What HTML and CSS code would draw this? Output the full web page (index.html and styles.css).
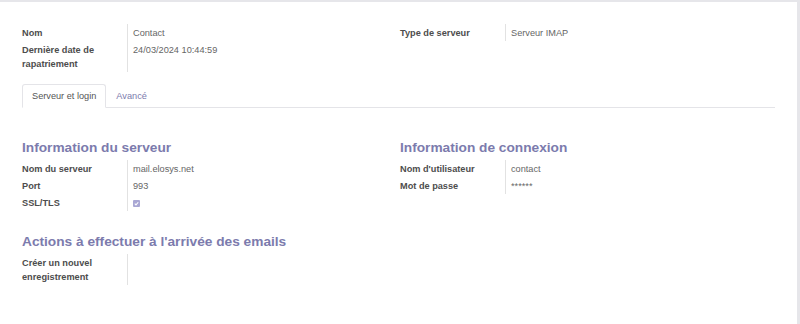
FILE: index.html
```html
<!DOCTYPE html>
<html lang="fr">
<head>
    <meta charset="UTF-8">
    <title>Serveur de courriels entrants</title>
    <link rel="stylesheet" href="styles.css">
</head>
<body>
    <div class="sheet">
        <div class="group">
            <div class="fields">
                <div class="field">
                    <div class="label">Nom</div>
                    <div class="value">Contact</div>
                </div>
                <div class="field">
                    <div class="label">Dernière date de rapatriement</div>
                    <div class="value">24/03/2024 10:44:59</div>
                </div>
            </div>
            <div class="fields">
                <div class="field">
                    <div class="label">Type de serveur</div>
                    <div class="value">Serveur IMAP</div>
                </div>
            </div>
        </div>

        <ul class="tabs">
            <li class="tab active">Serveur et login</li>
            <li class="tab">Avancé</li>
        </ul>

        <div class="tab-content">
            <div class="group">
                <div class="fields">
                    <h2>Information du serveur</h2>
                    <div class="field">
                        <div class="label">Nom du serveur</div>
                        <div class="value">mail.elosys.net</div>
                    </div>
                    <div class="field">
                        <div class="label">Port</div>
                        <div class="value">993</div>
                    </div>
                    <div class="field">
                        <div class="label">SSL/TLS</div>
                        <div class="value">
                            <span class="checkbox">
                                <svg width="7" height="7" viewBox="0 0 8 8"><path d="M2 4.2 L3.4 5.6 L6 2.6" fill="none" stroke="#fff" stroke-width="1.2"/></svg>
                            </span>
                        </div>
                    </div>
                </div>
                <div class="fields">
                    <h2>Information de connexion</h2>
                    <div class="field">
                        <div class="label">Nom d'utilisateur</div>
                        <div class="value">contact</div>
                    </div>
                    <div class="field">
                        <div class="label">Mot de passe</div>
                        <div class="value">******</div>
                    </div>
                </div>
            </div>

            <h2 class="actions-title">Actions à effectuer à l'arrivée des emails</h2>
            <div class="group">
                <div class="fields">
                    <div class="field">
                        <div class="label">Créer un nouvel enregistrement</div>
                        <div class="value"></div>
                    </div>
                </div>
            </div>
        </div>
    </div>
</body>
</html>
```

FILE: styles.css
```css
html, body {
    height: 100%;
}

body {
    margin: 0;
    font-family: "Liberation Sans", Arial, sans-serif;
    font-size: 9.2px;
    line-height: 14px;
    color: #4c4c4c;
    background-color: #e6e6ea;
}

.sheet {
    background-color: #fff;
    margin: 2px 3px 0 0;
    min-height: calc(100% - 2px);
    padding: 22px 22px 0 22px;
    box-sizing: border-box;
}

.group {
    display: grid;
    grid-template-columns: 378px 1fr;
}

.field {
    display: grid;
    grid-template-columns: 105px 1fr;
}

.label {
    font-weight: bold;
    color: #4d4d4d;
    padding: 1.5px 10px 1.5px 0;
}

.value {
    border-left: 1px solid #e2e2e2;
    padding: 1.5px 0 1.5px 5px;
    color: #666;
}

.tabs {
    list-style: none;
    margin: 12px 0 0 0;
    padding: 0;
    display: flex;
    border-bottom: 1px solid #e4e4e8;
}

.tab {
    padding: 4px 9px 4px 9px;
    margin-bottom: -1px;
    border: 1px solid transparent;
    color: #7c7bad;
}

.tab.active {
    color: #555;
    background-color: #fff;
    border-color: #e4e4e8;
    border-bottom-color: #fff;
    border-radius: 3px 3px 0 0;
}

.tab-content {
    padding-top: 31px;
}

h2 {
    margin: 0 0 3px 0;
    font-size: 13.7px;
    line-height: 18px;
    color: #7c7bad;
    font-weight: bold;
}

.actions-title {
    margin-top: 22px;
}

.checkbox {
    display: inline-flex;
    align-items: center;
    justify-content: center;
    width: 7px;
    height: 7px;
    background-color: #a9a7d4;
    border-radius: 1px;
    vertical-align: -1px;
}
```
